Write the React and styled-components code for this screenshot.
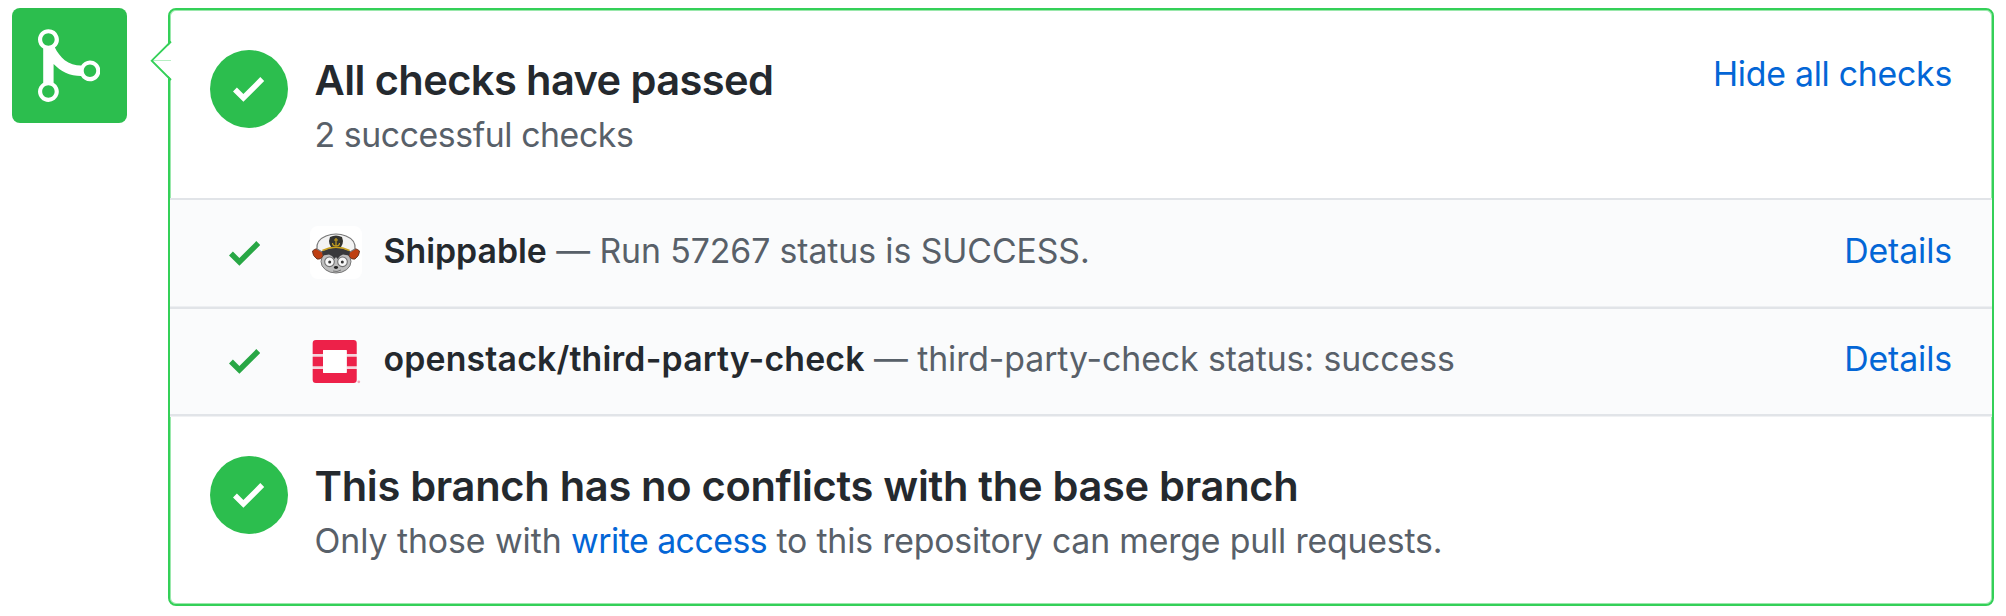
import React from "react";
import styled, { createGlobalStyle } from "styled-components";

const GlobalStyle = createGlobalStyle`
  * { box-sizing: border-box; }
  body {
    margin: 0;
    background: #fff;
    color: #24292e;
    font-family: Inter, "Liberation Sans", sans-serif;
    font-size: 33.8px;
    line-height: 50px;
  }
  svg { display: block; }
`;

const Page = styled.main`
  display: flex;
  align-items: flex-start;
  gap: 41px;
  width: 2006px;
  height: 616px;
  padding: 8px 12px 10px;
`;

const MergeBadge = styled.div`
  flex: none;
  width: 115px;
  height: 115px;
  padding: 16px 0 0 26px;
  border-radius: 8px;
  background: #2cbe4e;
  color: #fff;
`;

const Card = styled.section`
  position: relative;
  flex: 1;
  height: 598px;
  border: 2px solid #34d058;
  border-radius: 8px;
  box-shadow: inset 0 0 0 1px #9ae8ac;
`;

const Caret = styled.svg`
  position: absolute;
  left: -20px;
  top: 29px;
`;

const Summary = styled.div`
  display: flex;
  align-items: flex-start;
  height: 188px;
  padding: ${(p) => p.$top}px 40px 0;
`;

const StatusCircle = styled.div`
  flex: none;
  display: flex;
  align-items: center;
  justify-content: center;
  width: 78px;
  height: 78px;
  margin-right: 26.5px;
  border-radius: 50%;
  background: #2cbe4e;
  color: #fff;
`;

const SummaryText = styled.div`
  flex: 1;
  padding-top: 3px;
  white-space: nowrap;
`;

const Title = styled.h3`
  margin: 0 0 3px;
  font-size: 41.6px;
  font-weight: 600;
  line-height: 54px;
  letter-spacing: ${(p) => p.$track}px;
`;

const Muted = styled.span`
  color: #586069;
  letter-spacing: ${(p) => p.$track}px;
`;

const Link = styled.a`
  color: #0366d6;
  letter-spacing: ${(p) => p.$track}px;
  white-space: nowrap;
`;

const ToggleLink = styled(Link)`
  margin-top: -1px;
`;

const CheckList = styled.ul`
  margin: 0;
  padding: 0;
  list-style: none;
`;

const CheckRow = styled.li`
  display: flex;
  align-items: flex-start;
  height: ${(p) => p.$height}px;
  padding: ${(p) => p.$top}px 40px 0 59px;
  border-top: 2px solid #e1e4e8;
  background: #fafbfc;
  box-shadow: ${(p) => (p.$last ? "0 2px 0 #e1e4e8, 0 3px 0 #f0f1f3" : "inset 0 -1px 0 #edeff2")};
`;

const RowCheck = styled.span`
  flex: none;
  width: 81px;
  padding-top: 6px;
  color: #28a745;
`;

const Avatar = styled.span`
  flex: none;
  width: 52px;
  height: 53px;
  margin-right: 21.5px;
  border-radius: 8px;
  background: ${(p) => p.$bg};
`;

const RowText = styled.div`
  flex: 1;
  white-space: nowrap;
`;

const Context = styled.strong`
  font-weight: 600;
  letter-spacing: ${(p) => p.$track}px;
`;

const MergeIcon = () => (
  <svg width="62.4" height="83.2" viewBox="0 0 12 16" fill="currentColor">
    <path
      fillRule="evenodd"
      d="M10 7c-.73 0-1.38.41-1.73 1.02V8C7.22 7.98 6 7.64 5.14 6.98c-.75-.58-1.5-1.61-1.89-2.44A1.993 1.993 0 0 0 2 .99C.89.99 0 1.89 0 3a2 2 0 0 0 1 1.72v6.56c-.59.35-1 .99-1 1.72 0 1.11.89 2 2 2a1.993 1.993 0 0 0 1-3.72V7.67c.67.7 1.44 1.27 2.3 1.69.86.42 2.03.63 2.97.64v-.02c.36.61 1 1.02 1.73 1.02 1.11 0 2-.89 2-2 0-1.11-.89-2-2-2zm-6.8 6c0 .66-.55 1.2-1.2 1.2-.65 0-1.2-.55-1.2-1.2 0-.65.55-1.2 1.2-1.2.65 0 1.2.55 1.2 1.2zm0-10c0 .66-.55 1.2-1.2 1.2-.65 0-1.2-.55-1.2-1.2 0-.65.55-1.2 1.2-1.2.65 0 1.2.55 1.2 1.2zm8 6c0 .66-.55 1.2-1.2 1.2-.65 0-1.2-.55-1.2-1.2 0-.65.55-1.2 1.2-1.2.65 0 1.2.55 1.2 1.2z"
    />
  </svg>
);

const CheckIcon = () => (
  <svg width="31.2" height="41.6" viewBox="0 0 12 16" fill="currentColor">
    <path d="M12 5l-8 8-4-4 1.5-1.5L4 10l6.5-6.5z" />
  </svg>
);

const CaptainLogo = () => (
  <svg width="52" height="53" viewBox="0 0 52 53">
    <ellipse cx="26" cy="35.500" rx="15" ry="11.500" fill="#bdbdbd" stroke="#777" strokeWidth="1" />
    <path d="M2.500 25q4-4 9.500-1l1 6q-2 4-6 3-4.500-3-4.500-8zM49.500 25q-4-4-9.500-1l-1 6q2 4 6 3 4.500-3 4.500-8z" fill="#bf3f12" stroke="#6b3a28" strokeWidth="1" />
    <path d="M7 23Q6 14 16 10q10-4 20 0 10 4 9 13l-5 3H12z" fill="#f3f3f3" stroke="#777" strokeWidth="1.2" />
    <path d="M20 11q6-3 12 0l1 4q0 3-2 6H21q-2-3-2-6z" fill="#33332f" />
    <path d="M12 25q14-7 28 0l-1 4.500-6-1-3 1.500-2.500 3-1.500-2-1.500 2-2.500-3-3-1.500-6 1z" fill="#39393b" />
    <path d="M12.500 24.500q13.500-6.500 27 0" fill="none" stroke="#c9a11e" strokeWidth="1.7" />
    <path d="M26 12v8M24 14h4M22.500 17q0 3 3.500 3t3.500-3" fill="none" stroke="#c9a11e" strokeWidth="1.2" />
    <circle cx="19.500" cy="35.800" r="4.800" fill="#f8f8f8" stroke="#707070" strokeWidth="1.1" />
    <circle cx="32.500" cy="35.800" r="4.800" fill="#f8f8f8" stroke="#707070" strokeWidth="1.1" />
    <circle cx="19.700" cy="36" r="1.500" fill="#333" />
    <circle cx="32.300" cy="36" r="1.500" fill="#333" />
    <ellipse cx="26" cy="41.500" rx="2.100" ry="1.400" fill="#222" />
    <path d="M23 45q4 1.500 8-1" fill="none" stroke="#777" strokeWidth="1" />
  </svg>
);

const OpenStackLogo = () => (
  <svg width="52" height="53" viewBox="0 0 52 53">
    <rect x="2.700" y="6" width="44" height="43" rx="3.500" fill="#f4d5dd" />
    <path d="M6 6h37.400a3.300 3.300 0 0 1 3.300 3.300V20H36.700V16H13V20H2.700V9.300A3.300 3.300 0 0 1 6 6z" fill="#ed2149" />
    <path d="M2.700 22.700H13V32.300H2.700zM36.700 22.700h10v9.600h-10z" fill="#ed2149" />
    <path d="M2.700 35H13v4H36.700V35h10v10.700a3.300 3.300 0 0 1-3.300 3.300H6a3.300 3.300 0 0 1-3.300-3.300z" fill="#ed2149" />
    <rect x="13" y="16" width="23.700" height="23" rx="1" fill="#fff" />
    <circle cx="48.800" cy="47.800" r="1.400" fill="#f0a9b8" />
  </svg>
);

const BranchCaret = () => (
  <Caret width="23" height="43" viewBox="0 0 23 43">
    <path d="M23 2L2 21.700 23 41.500z" fill="#fff" />
    <path d="M3 21.500H21" stroke="#b7efc3" strokeWidth="1" />
    <path d="M21 2.500L1.700 21.700 21 41" fill="none" stroke="#34d058" strokeWidth="1.8" />
  </Caret>
);

export default function App() {
  return (
    <>
      <GlobalStyle />
      <Page>
        <MergeBadge>
          <MergeIcon />
        </MergeBadge>
        <Card>
          <BranchCaret />
          <Summary $top={40}>
            <StatusCircle>
              <CheckIcon />
            </StatusCircle>
            <SummaryText>
              <Title $track={-0.59}>All checks have passed</Title>
              <Muted $track={-0.42}>2 successful checks</Muted>
            </SummaryText>
            <ToggleLink $track={-0.25}>Hide all checks</ToggleLink>
          </Summary>
          <CheckList>
            <CheckRow $height={109} $top={26}>
              <RowCheck>
                <CheckIcon />
              </RowCheck>
              <Avatar $bg="#fff">
                <CaptainLogo />
              </Avatar>
              <RowText>
                <Context $track={0}>Shippable</Context>
                <Muted $track={-0.09}> — Run 57267 status is SUCCESS.</Muted>
              </RowText>
              <Link $track={-0.1}>Details</Link>
            </CheckRow>
            <CheckRow $height={107} $top={25} $last>
              <RowCheck>
                <CheckIcon />
              </RowCheck>
              <Avatar $bg="transparent">
                <OpenStackLogo />
              </Avatar>
              <RowText>
                <Context $track={0.18}>openstack/third-party-check</Context>
                <Muted $track={-0.08}> — third-party-check status: success</Muted>
              </RowText>
              <Link $track={-0.1}>Details</Link>
            </CheckRow>
          </CheckList>
          <Summary $top={42}>
            <StatusCircle>
              <CheckIcon />
            </StatusCircle>
            <SummaryText>
              <Title $track={-0.3}>This branch has no conflicts with the base branch</Title>
              <Muted $track={-0.05}>Only those with </Muted>
              <Link $track={-0.5}>write access</Link>
              <Muted $track={-0.17}> to this repository can merge pull requests.</Muted>
            </SummaryText>
          </Summary>
        </Card>
      </Page>
    </>
  );
}
